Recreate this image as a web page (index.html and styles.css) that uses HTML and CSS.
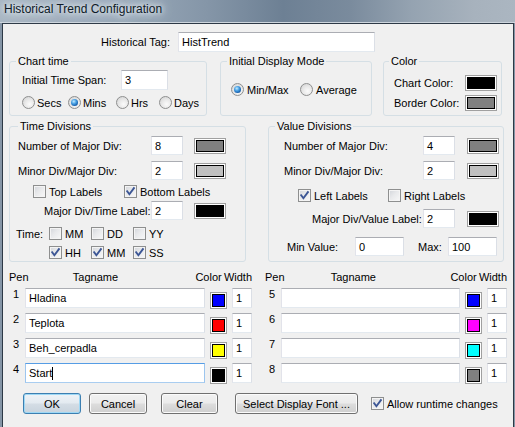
FILE: index.html
```html
<!DOCTYPE html>
<html>
<head>
<meta charset="utf-8">
<title>Historical Trend Configuration</title>
<link rel="stylesheet" href="styles.css">
</head>
<body>
<div class="titlebar"><span class="title">Historical Trend Configuration</span></div>
<div class="client">
  <div class="tagrow">
    <span class="tag-label">Historical Tag:</span>
    <div class="tb tb-tag">HistTrend</div>
  </div>

  <div class="toprow">
    <section class="gb gb-chart">
      <span class="gb-title">Chart time</span>
      <div class="line span-line"><span class="lbl-span">Initial Time Span:</span><div class="tb tb-span">3</div></div>
      <div class="line radio-line">
        <span class="opt opt-secs"><i class="rb"></i>Secs</span>
        <span class="opt opt-mins"><i class="rb on"></i>Mins</span>
        <span class="opt opt-hrs"><i class="rb"></i>Hrs</span>
        <span class="opt"><i class="rb"></i>Days</span>
      </div>
    </section>
    <section class="gb gb-mode">
      <span class="gb-title">Initial Display Mode</span>
      <div class="line mode-line">
        <span class="opt opt-minmax"><i class="rb on"></i>Min/Max</span>
        <span class="opt"><i class="rb"></i>Average</span>
      </div>
    </section>
    <section class="gb gb-color">
      <span class="gb-title">Color</span>
      <div class="line clr-line clr-1"><span class="lbl-clr">Chart Color:</span><span class="sw"><i class="c-black"></i></span></div>
      <div class="line clr-line clr-2"><span class="lbl-clr">Border Color:</span><span class="sw"><i class="c-gray"></i></span></div>
    </section>
  </div>

  <div class="divrow">
    <section class="gb gb-time">
      <span class="gb-title">Time Divisions</span>
      <div class="line dv t1"><span class="lbl-t1">Number of Major Div:</span><div class="tb tb-div">8</div><span class="sw"><i class="c-gray"></i></span></div>
      <div class="line dv t2"><span class="lbl-t1">Minor Div/Major Div:</span><div class="tb tb-div">2</div><span class="sw"><i class="c-silver"></i></span></div>
      <div class="line cbl t3">
        <span class="opt opt-top"><i class="cb"></i>Top Labels</span>
        <span class="opt"><i class="cb"><svg viewBox="0 0 11 11"><path d="M2.2 5.3 L4.4 8.2 L8.9 2.2"/></svg></i>Bottom Labels</span>
      </div>
      <div class="line dv t4"><span class="lbl-t4">Major Div/Time Label:</span><div class="tb tb-div">2</div><span class="sw"><i class="c-black"></i></span></div>
      <div class="line cbl t5">
        <span class="lbl-time">Time:</span>
        <span class="opt opt-tm"><i class="cb"></i>MM</span>
        <span class="opt opt-tm"><i class="cb"></i>DD</span>
        <span class="opt"><i class="cb"></i>YY</span>
      </div>
      <div class="line cbl t6">
        <span class="opt opt-tm"><i class="cb"><svg viewBox="0 0 11 11"><path d="M2.2 5.3 L4.4 8.2 L8.9 2.2"/></svg></i>HH</span>
        <span class="opt opt-tm"><i class="cb"><svg viewBox="0 0 11 11"><path d="M2.2 5.3 L4.4 8.2 L8.9 2.2"/></svg></i>MM</span>
        <span class="opt"><i class="cb"><svg viewBox="0 0 11 11"><path d="M2.2 5.3 L4.4 8.2 L8.9 2.2"/></svg></i>SS</span>
      </div>
    </section>
    <section class="gb gb-value">
      <span class="gb-title">Value Divisions</span>
      <div class="line dv v1"><span class="lbl-v1">Number of Major Div:</span><div class="tb tb-div">4</div><span class="sw"><i class="c-gray"></i></span></div>
      <div class="line dv v2"><span class="lbl-v1">Minor Div/Major Div:</span><div class="tb tb-div">2</div><span class="sw"><i class="c-silver"></i></span></div>
      <div class="line cbl v3">
        <span class="opt opt-left"><i class="cb"><svg viewBox="0 0 11 11"><path d="M2.2 5.3 L4.4 8.2 L8.9 2.2"/></svg></i>Left Labels</span>
        <span class="opt"><i class="cb"></i>Right Labels</span>
      </div>
      <div class="line dv v4"><span class="lbl-v4">Major Div/Value Label:</span><div class="tb tb-div">2</div><span class="sw"><i class="c-black"></i></span></div>
      <div class="line dv v5"><span class="lbl-min">Min Value:</span><div class="tb tb-mm">0</div><span class="lbl-max">Max:</span><div class="tb tb-mm">100</div></div>
    </section>
  </div>

  <div class="pens">
    <div class="pen-col">
      <div class="pen-head"><span class="ph-pen">Pen</span><span class="ph-tag">Tagname</span><span class="ph-color">Color</span><span>Width</span></div>
      <div class="pen-rows">
        <div class="pen-row"><span class="pen-num">1</span><div class="tb tb-pen">Hladina</div><span class="sw pen-sw"><i class="c-blue"></i></span><div class="tb tb-pen">1</div></div>
        <div class="pen-row"><span class="pen-num">2</span><div class="tb tb-pen">Teplota</div><span class="sw pen-sw"><i class="c-red"></i></span><div class="tb tb-pen">1</div></div>
        <div class="pen-row"><span class="pen-num">3</span><div class="tb tb-pen">Beh_cerpadla</div><span class="sw pen-sw"><i class="c-yellow"></i></span><div class="tb tb-pen">1</div></div>
        <div class="pen-row"><span class="pen-num">4</span><div class="tb tb-pen focus">Start<span class="caret"></span></div><span class="sw pen-sw"><i class="c-black"></i></span><div class="tb tb-pen">1</div></div>
      </div>
    </div>
    <div class="pen-col">
      <div class="pen-head"><span class="ph-pen ph-pen-r">Pen</span><span class="ph-tag ph-tag-r">Tagname</span><span class="ph-color">Color</span><span>Width</span></div>
      <div class="pen-rows">
        <div class="pen-row"><span class="pen-num">5</span><div class="tb tb-pen"></div><span class="sw pen-sw"><i class="c-blue"></i></span><div class="tb tb-pen">1</div></div>
        <div class="pen-row"><span class="pen-num">6</span><div class="tb tb-pen"></div><span class="sw pen-sw"><i class="c-magenta"></i></span><div class="tb tb-pen">1</div></div>
        <div class="pen-row"><span class="pen-num">7</span><div class="tb tb-pen"></div><span class="sw pen-sw"><i class="c-cyan"></i></span><div class="tb tb-pen">1</div></div>
        <div class="pen-row"><span class="pen-num">8</span><div class="tb tb-pen"></div><span class="sw pen-sw"><i class="c-gray"></i></span><div class="tb tb-pen">1</div></div>
      </div>
    </div>
  </div>

  <div class="btnrow">
    <span class="btn btn-ok">OK</span>
    <span class="btn btn-cancel">Cancel</span>
    <span class="btn btn-clear">Clear</span>
    <span class="btn btn-font">Select Display Font ...</span>
    <span class="opt"><i class="cb"><svg viewBox="0 0 11 11"><path d="M2.2 5.3 L4.4 8.2 L8.9 2.2"/></svg></i>Allow runtime changes</span>
  </div>
</div>
</body>
</html>
```

FILE: styles.css
```css
* { box-sizing: border-box; }
html, body { margin: 0; padding: 0; }
body {
  width: 515px;
  height: 427px;
  overflow: hidden;
  background: #8595a6;
  font-family: "Liberation Sans", Arial, sans-serif;
  font-size: 11px;
  color: #000;
}

.titlebar {
  height: 23px;
  padding: 2px 0 0 4px;
  background: linear-gradient(to right, #a8b6c3 0%, #97a7b7 25%, #8596a8 40%, #6d8094 55%, #7a8b9d 68%, #95a3b1 80%, #a7b2bd 92%, #abb6c1 100%);
  border-bottom: 1px solid #cdd5dd;
}
.title {
  font-size: 12px;
  line-height: 15px;
  color: #0e1a27;
  text-shadow: 0 0 4px #e9eef3, 0 0 8px #dfe6ed, 0 0 12px #d3dce5, 0 0 16px #c9d3dd;
}

.client {
  margin-left: 2px;
  width: 512px;
  height: 404px;
  background: #f0f0f0;
  border: 1px solid #2d3946;
  border-bottom: none;
  overflow: hidden;
}

.line { display: flex; align-items: center; flex-shrink: 0; white-space: nowrap; }

/* text boxes */
.tb {
  display: flex;
  align-items: center;
  height: 19px;
  padding-left: 3px;
  background: #fff;
  border: 1px solid;
  border-color: #abadb3 #dbdfe6 #e3e9ef #e2e3ea;
  white-space: nowrap;
  flex-shrink: 0;
}
.tb.focus { border-color: #569de5 #9cc5ee #a9cdf0 #9cc5ee; }
.caret { display: inline-block; width: 1px; height: 13px; background: #000; }

.tagrow { display: flex; align-items: center; height: 20px; margin-top: 8px; }
.tag-label { width: 167px; text-align: right; margin-right: 8px; }
.tb-tag { width: 197px; height: 20px; }

/* group boxes */
.gb {
  display: flex;
  flex-direction: column;
  border: 1px solid #d5dfe5;
  border-radius: 3px;
}
.gb-title {
  align-self: flex-start;
  height: 13px;
  line-height: 13px;
  margin-top: -7px;
  padding: 0 2px;
  background: #f0f0f0;
  white-space: nowrap;
}

.toprow { display: flex; height: 55px; margin-top: 9px; padding-left: 6px; }
.gb-chart { width: 198px; margin-right: 13px; }
.gb-chart .gb-title { margin-left: 6px; }
.gb-mode { width: 152px; margin-right: 11px; }
.gb-mode .gb-title { margin-left: 6px; }
.gb-color { width: 119px; }
.gb-color .gb-title { margin-left: 5px; }

.span-line { height: 20px; margin-top: 2px; padding-left: 12px; }
.lbl-span { width: 99px; }
.tb-span { width: 47px; height: 20px; }
.radio-line { height: 13px; margin-top: 6px; padding-left: 12px; }

.opt { display: flex; align-items: center; gap: 2px; white-space: nowrap; flex-shrink: 0; }
.opt-secs { width: 46px; }
.opt-mins { width: 48px; }
.opt-hrs { width: 43px; }
.mode-line { height: 13px; margin-top: 15px; padding-left: 10px; }
.mode-line .opt { gap: 3px; }
.opt-minmax { width: 69px; }

.clr-line { height: 16px; padding-left: 10px; }
.clr-1 { margin-top: 7px; }
.clr-2 { margin-top: 4px; }
.lbl-clr { width: 71px; }

/* radio buttons */
.rb {
  display: flex;
  align-items: center;
  justify-content: center;
  width: 13px;
  height: 13px;
  flex-shrink: 0;
  border-radius: 50%;
  border: 1px solid #8e8f8f;
  background: radial-gradient(circle at 60% 65%, #fbfbfb 0%, #e9e9e9 45%, #cfcfcf 100%);
}
.rb.on::after {
  content: "";
  width: 7px;
  height: 7px;
  border-radius: 50%;
  background: radial-gradient(circle at 40% 35%, #c4ebff 0%, #4ea5e6 35%, #1762b0 70%, #0b3f7f 100%);
}

/* check boxes */
.cb {
  display: flex;
  align-items: center;
  justify-content: center;
  width: 13px;
  height: 13px;
  flex-shrink: 0;
  border: 1px solid #8e8f8f;
  background: linear-gradient(135deg, #d2d5da 0%, #e8e9eb 45%, #f8f8f8 100%);
  box-shadow: inset 0 0 0 1px #f4f4f4;
}
.cb svg { width: 11px; height: 11px; display: block; }
.cb path { fill: none; stroke: #3c5695; stroke-width: 1.9; stroke-linecap: square; stroke-linejoin: miter; }
.cbl .opt, .btnrow .opt { gap: 3px; }

/* color swatches */
.sw {
  display: block;
  width: 32px;
  height: 16px;
  padding: 1px;
  border: 1px solid #a0a0a0;
  background: #fff;
  flex-shrink: 0;
}
.sw i { display: block; height: 100%; border: 1px solid #000; }
.c-black { background: #000; }
.c-gray { background: #808080; }
.c-silver { background: #c0c0c0; }
.c-blue { background: #0000ff; }
.c-red { background: #ff0000; }
.c-yellow { background: #ffff00; }
.c-magenta { background: #ff00ff; }
.c-cyan { background: #00ffff; }

/* divisions */
.divrow { display: flex; height: 136px; margin-top: 10px; padding-left: 6px; }
.gb-time { width: 237px; margin-right: 22px; }
.gb-time .gb-title { margin-left: 8px; }
.gb-value { width: 236px; }
.gb-value .gb-title { margin-left: 6px; }

.dv { height: 19px; }
.tb-div { width: 32px; }
.t1 { margin-top: 3px; padding-left: 8px; }
.t2 { margin-top: 6px; padding-left: 8px; }
.lbl-t1 { width: 133px; }
.t1 .tb-div, .t2 .tb-div, .t4 .tb-div { margin-right: 11px; }
.cbl { height: 13px; }
.t3 { margin-top: 5px; padding-left: 23px; }
.opt-top { width: 91px; }
.t4 { margin-top: 3px; padding-left: 34px; }
.lbl-t4 { width: 107px; }
.t5 { margin-top: 7px; padding-left: 6px; }
.lbl-time { width: 33px; }
.opt-tm { width: 42px; }
.t6 { margin-top: 6px; padding-left: 39px; }

.v1 { margin-top: 3px; padding-left: 15px; }
.v2 { margin-top: 6px; padding-left: 15px; }
.lbl-v1 { width: 139px; }
.v1 .tb-div, .v2 .tb-div, .v4 .tb-div { margin-right: 12px; }
.v3 { margin-top: 9px; padding-left: 29px; }
.opt-left { width: 90px; }
.v4 { margin-top: 7px; padding-left: 43px; }
.lbl-v4 { width: 111px; }
.v5 { margin-top: 9px; padding-left: 18px; }
.lbl-min { width: 68px; }
.tb-mm { width: 49px; }
.lbl-max { width: 30px; margin-left: 14px; }

/* pens */
.pens {
  display: grid;
  grid-template-columns: 243px 242px;
  column-gap: 13px;
  margin-top: 9px;
  padding-left: 6px;
}
.pen-col { display: flex; flex-direction: column; }
.pen-head { display: flex; height: 13px; line-height: 13px; white-space: nowrap; }
.ph-pen { width: 65px; }
.ph-pen-r { width: 67px; }
.ph-tag { width: 125px; }
.ph-tag-r { width: 122px; }
.ph-color { width: 29px; }
.pen-rows { display: grid; row-gap: 5px; margin-top: 4px; }
.pen-row {
  display: grid;
  grid-template-columns: 11px 1fr 17px 20px;
  column-gap: 5px;
  height: 20px;
  align-items: start;
}
.pen-num { line-height: 13px; padding-left: 4px; }
.tb-pen { height: 20px; }
.pen-sw { width: 17px; height: 17px; margin-top: 4px; }

/* buttons */
.btnrow { display: flex; align-items: center; height: 21px; margin-top: 10px; padding-left: 20px; }
.btn {
  display: flex;
  align-items: center;
  justify-content: center;
  height: 21px;
  flex-shrink: 0;
  border: 1px solid #707070;
  border-radius: 3px;
  background: linear-gradient(#f2f2f2 0%, #ebebeb 48%, #dddddd 52%, #cfcfcf 100%);
  box-shadow: inset 0 0 0 1px #fbfbfb;
  white-space: nowrap;
}
.btn-ok {
  width: 58px;
  margin-right: 8px;
  border-color: #3c7fb1;
  background: linear-gradient(#eef3f7 0%, #e3eaf0 48%, #d4dde5 52%, #c8d3dd 100%);
  box-shadow: inset 0 0 0 1px #9ed8f5;
}
.btn-cancel { width: 58px; margin-right: 14px; }
.btn-clear { width: 57px; margin-right: 17px; }
.btn-font { width: 123px; margin-right: 13px; }
```
